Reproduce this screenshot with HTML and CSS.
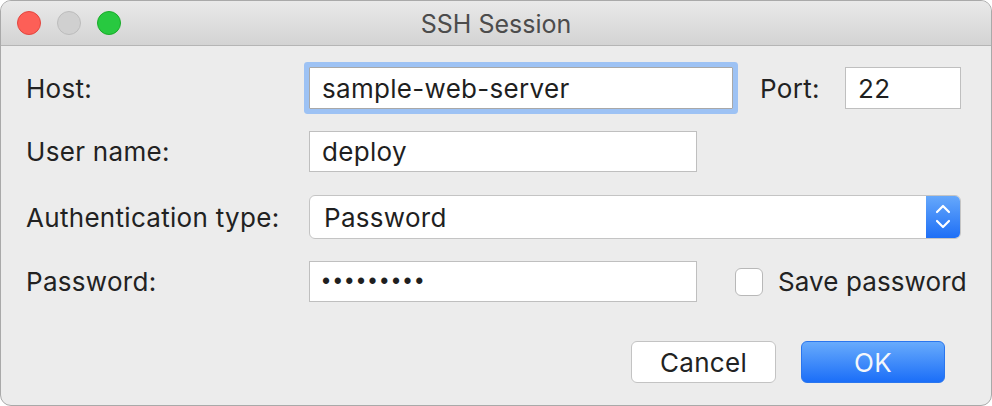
FILE: index.html
```html
<!DOCTYPE html>
<html>
<head>
<meta charset="utf-8">
<link rel="stylesheet" href="styles.css">
</head>
<body>
<div class="window">
  <div class="titlebar">
    <div class="lights">
      <span class="light red"></span>
      <span class="light gray"></span>
      <span class="light green"></span>
    </div>
    <div class="title">SSH Session</div>
  </div>
  <div class="content">
    <div class="row row-host">
      <label class="label">Host:</label>
      <div class="field field-host focused">sample-web-server</div>
      <label class="label-port">Port:</label>
      <div class="field field-port">22</div>
    </div>
    <div class="row row-user">
      <label class="label">User name:</label>
      <div class="field field-user">deploy</div>
    </div>
    <div class="row row-auth">
      <label class="label">Authentication type:</label>
      <div class="select">
        <span class="select-value">Password</span>
        <span class="select-arrows">
          <svg width="16" height="26" viewBox="0 0 16 26">
            <path d="M2 8 L8 2 L14 8" fill="none" stroke="#fff" stroke-width="2.2" stroke-linecap="round" stroke-linejoin="round"/>
            <path d="M2 17 L8 23 L14 17" fill="none" stroke="#fff" stroke-width="2.2" stroke-linecap="round" stroke-linejoin="round"/>
          </svg>
        </span>
      </div>
    </div>
    <div class="row row-pass">
      <label class="label">Password:</label>
      <div class="field field-pass"><span class="dots">•••••••••</span></div>
      <div class="check">
        <span class="checkbox"></span>
        <span class="check-label">Save password</span>
      </div>
    </div>
    <div class="buttons">
      <button class="btn btn-cancel">Cancel</button>
      <button class="btn btn-ok">OK</button>
    </div>
  </div>
</div>
</body>
</html>
```
FILE: styles.css
```css
* { box-sizing: border-box; }
html, body {
  margin: 0;
  padding: 0;
  background: #ffffff;
}
body {
  font-family: "Inter", "Liberation Sans", sans-serif;
  color: #222222;
}
.window {
  width: 992px;
  height: 406px;
  border: 1px solid #a9a9a9;
  border-radius: 11px;
  background: #ececec;
  overflow: hidden;
}
.titlebar {
  height: 45px;
  background: linear-gradient(#e9e9e9, #d3d3d3);
  border-bottom: 1px solid #b5b5b5;
  display: flex;
  align-items: center;
  position: relative;
}
.lights {
  display: flex;
  gap: 16px;
  padding-left: 16px;
}
.light {
  width: 24px;
  height: 24px;
  border-radius: 50%;
  display: block;
}
.red { background: #fd5f57; border: 1px solid #e2463f; }
.gray { background: #d0d0d0; border: 1px solid #bcbcbc; }
.green { background: #28c940; border: 1px solid #1aab29; }
.title {
  position: absolute;
  left: 0;
  right: 0;
  text-align: center;
  font-size: 25px;
  color: #4c4c4c;
  top: 8px;
}
.content {
  padding: 21px 0 0 25px;
}
.row {
  display: flex;
  align-items: center;
}
.label, .label-port, .field, .select-value, .check-label, .btn {
  font-size: 26px;
  letter-spacing: 0.3px;
}
.label {
  width: 283px;
  color: #222;
}
.field {
  background: #fff;
  border: 1px solid #bfbfbf;
  height: 42px;
  padding-left: 12px;
  display: flex;
  align-items: center;
  color: #1f1f1f;
}
.field-host { width: 424px; }
.focused {
  border-color: #a8a8a8;
  box-shadow: 0 0 0 5px #9dc2f4;
  border-radius: 1px;
}
.label-port {
  margin-left: 27px;
  width: 85px;
}
.field-port { width: 116px; }
.row-user { margin-top: 22px; }
.field-user { width: 388px; height: 41px; }
.row-auth { margin-top: 23px; }
.select {
  width: 652px;
  height: 44px;
  background: #fff;
  border: 1px solid #c4c4c4;
  border-radius: 6px;
  display: flex;
  align-items: stretch;
  overflow: hidden;
}
.select-value {
  flex: 1;
  display: flex;
  align-items: center;
  padding-left: 14px;
  color: #1f1f1f;
}
.select-arrows {
  width: 34px;
  background: linear-gradient(#66a8fb, #1e6ff6);
  display: flex;
  align-items: center;
  justify-content: center;
}
.row-pass { margin-top: 22px; }
.field-pass { width: 388px; height: 41px; }
.field-pass .dots {
  font-size: 23px;
  letter-spacing: 3.6px;
  font-family: "Liberation Sans", sans-serif;
}
.check {
  display: flex;
  align-items: center;
  margin-left: 38px;
}
.checkbox {
  width: 28px;
  height: 28px;
  border: 1px solid #b8b8b8;
  border-radius: 6px;
  background: #fff;
  display: block;
}
.check-label {
  margin-left: 15px;
  color: #222;
  letter-spacing: 0.1px;
}
.buttons {
  display: flex;
  justify-content: flex-end;
  gap: 25px;
  margin-top: 39px;
  padding-right: 46px;
}
.btn {
  height: 42px;
  font-family: "Inter", "Liberation Sans", sans-serif;
  border-radius: 6px;
  padding: 0;
}
.btn-cancel {
  width: 145px;
  background: #fff;
  border: 1px solid #c3c3c3;
  color: #222;
}
.btn-ok {
  width: 144px;
  background: linear-gradient(#68abfc, #1b6ef8);
  border: 1px solid #2a76ee;
  color: #f4f7fb;
}
```
